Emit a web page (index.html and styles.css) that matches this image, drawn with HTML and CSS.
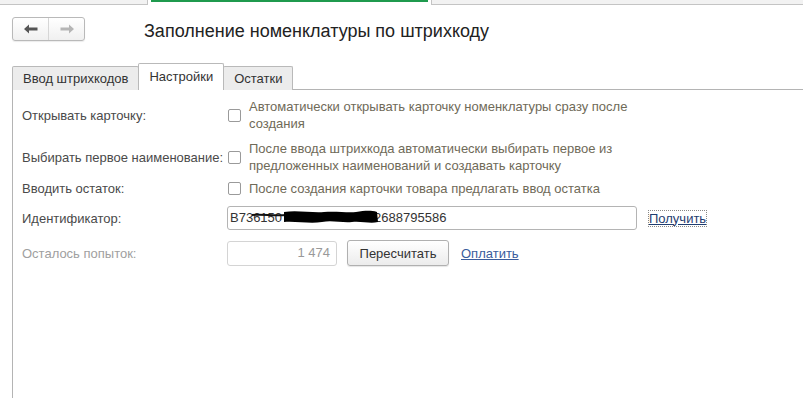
FILE: index.html
```html
<!DOCTYPE html>
<html lang="ru">
<head>
<meta charset="UTF-8">
<title>Заполнение номенклатуры по штрихкоду</title>
<link rel="stylesheet" href="styles.css">
</head>
<body>
<div class="window-tabs">
    <div class="window-tab"></div>
    <div class="window-tab active"><div class="green-bar"></div></div>
    <div class="window-tab rest"></div>
</div>
<header class="header">
    <div class="nav-buttons">
        <div class="nav-btn">
            <svg width="14" height="10" viewBox="0 0 14 10"><path d="M0 5 L5 0.5 L5 3.5 L13.5 3.5 L13.5 6.5 L5 6.5 L5 9.5 Z" fill="#555"/></svg>
        </div>
        <div class="nav-btn">
            <svg width="14" height="10" viewBox="0 0 14 10"><path d="M14 5 L9 0.5 L9 3.5 L0.5 3.5 L0.5 6.5 L9 6.5 L9 9.5 Z" fill="#b5b5b5"/></svg>
        </div>
    </div>
    <h1 class="title">Заполнение номенклатуры по штрихкоду</h1>
</header>
<nav class="tabs">
    <div class="tab">Ввод штрихкодов</div>
    <div class="tab active">Настройки</div>
    <div class="tab">Остатки</div>
</nav>
<main class="panel">
    <div class="row row-open">
        <div class="label">Открывать карточку:</div>
        <div class="check">
            <span class="box"></span>
            <span class="check-text">Автоматически открывать карточку номенклатуры сразу после создания</span>
        </div>
    </div>
    <div class="row row-first">
        <div class="label">Выбирать первое наименование:</div>
        <div class="check">
            <span class="box"></span>
            <span class="check-text">После ввода штрихкода автоматически выбирать первое из предложенных наименований и создавать карточку</span>
        </div>
    </div>
    <div class="row row-rest">
        <div class="label">Вводить остаток:</div>
        <div class="check">
            <span class="box"></span>
            <span class="check-text">После создания карточки товара предлагать ввод остатка</span>
        </div>
    </div>
    <div class="row row-id">
        <div class="label">Идентификатор:</div>
        <div class="field id-field">
            <span>B736150</span><span class="hidden-part"></span><span>2688795586</span>
            <svg class="scribble" width="130" height="24" viewBox="0 0 130 24">
                <path d="M0 8 C10 7 22 9 34 8" stroke="#111" stroke-width="2" fill="none"/>
                <path d="M32 5 C45 3 60 6 72 5 C84 4 96 6 104 5 C112 4 118 3 125 5 L126 15 C118 17 110 14 100 15 C90 16 80 13 70 15 C58 17 44 14 32 15 Z" fill="#000"/>
            </svg>
        </div>
        <a class="link focused" href="#">Получить</a>
    </div>
    <div class="row row-tries">
        <div class="label muted">Осталось попыток:</div>
        <div class="field count-field">1 474</div>
        <button class="button">Пересчитать</button>
        <a class="link pay" href="#">Оплатить</a>
    </div>
</main>
</body>
</html>
```

FILE: styles.css
```css
body {
    margin: 0;
    background-color: #fff;
    font-family: "Liberation Sans", Arial, sans-serif;
    font-size: 13px;
    color: #333;
    overflow: hidden;
}
.window-tabs {
    display: flex;
    height: 5px;
}
.window-tab {
    width: 147px;
    background-color: #f2f2f2;
    border-bottom: 1px solid #c4c4c4;
    box-sizing: border-box;
}
.window-tab.active {
    width: 285px;
    background-color: #fff;
    border-bottom: none;
    border-left: 1px solid #c4c4c4;
    border-right: 1px solid #c4c4c4;
    padding: 0 3px;
}
.window-tab.rest {
    flex: 1;
}
.green-bar {
    height: 2px;
    background-color: #1f9a4e;
}
.header {
    display: flex;
    align-items: flex-start;
    margin: 12px 0 0 12px;
}
.nav-buttons {
    display: flex;
    width: 73px;
    height: 24px;
    box-sizing: border-box;
    border: 1px solid #b9b9b9;
    border-radius: 3px;
    background: linear-gradient(#fff, #f0f0f0);
    box-shadow: 0 1px 1px rgba(0, 0, 0, 0.08);
}
.nav-btn {
    flex: 1;
    display: flex;
    align-items: center;
    justify-content: center;
}
.nav-btn + .nav-btn {
    border-left: 1px solid #d6d6d6;
}
.title {
    margin: 2px 0 0 59px;
    font-size: 18px;
    line-height: 24px;
    font-weight: normal;
    color: #222;
}
.tabs {
    display: flex;
    align-items: flex-end;
    margin: 20px 0 -1px 12px;
    position: relative;
}
.tab {
    height: 24px;
    line-height: 23px;
    padding: 0 10px;
    box-sizing: border-box;
    background-color: #ececec;
    border: 1px solid #b9b9b9;
    border-bottom: none;
    border-radius: 2px 2px 0 0;
    color: #333;
}
.tab + .tab {
    margin-left: -1px;
}
.tab.active {
    height: 27px;
    line-height: 26px;
    background-color: #fff;
    position: relative;
    z-index: 1;
}
.panel {
    margin-left: 12px;
    border-top: 1px solid #b4b4b4;
    border-left: 1px solid #b4b4b4;
    height: 320px;
    padding: 8px 0 0 9px;
    box-sizing: border-box;
}
.row {
    display: flex;
    align-items: center;
}
.row-first {
    margin-top: 8px;
}
.row-rest {
    margin-top: 6px;
}
.row-id {
    margin-top: 9px;
}
.row-tries {
    margin-top: 10px;
}
.label {
    width: 205px;
    flex-shrink: 0;
    color: #4a4a4a;
}
.label.muted {
    color: #a0a0a0;
}
.check {
    display: flex;
    align-items: center;
    margin-left: 1px;
}
.box {
    width: 13px;
    height: 13px;
    box-sizing: border-box;
    border: 1px solid #9a9a9a;
    border-radius: 2px;
    background-color: #fff;
    margin-right: 8px;
    flex-shrink: 0;
}
.check-text {
    width: 400px;
    line-height: 17px;
    color: #6f6a58;
}
.field {
    height: 24px;
    line-height: 22px;
    box-sizing: border-box;
    border: 1px solid #b4b4b4;
    border-radius: 3px;
    padding: 0 2px;
    background-color: #fff;
}
.id-field {
    position: relative;
    width: 410px;
    display: flex;
}
.hidden-part {
    width: 92px;
}
.scribble {
    position: absolute;
    left: 24px;
    top: 0;
}
.link {
    color: #1f3d70;
    text-decoration: underline;
    margin-left: 12px;
}
.link.focused {
    outline: 1px dotted #888;
    outline-offset: 0;
}
.count-field {
    width: 110px;
    height: 25px;
    text-align: right;
    padding-right: 6px;
    border-color: #d4d4d4;
    color: #999;
}
.button {
    margin-left: 10px;
    width: 102px;
    height: 26px;
    font-family: inherit;
    font-size: 13px;
    color: #333;
    border: 1px solid #b0b0b0;
    border-radius: 3px;
    background: linear-gradient(#fff, #ececec);
    box-shadow: 0 1px 1px rgba(0, 0, 0, 0.1);
    padding: 0;
}
.link.pay {
    color: #3a5c9c;
}
```
